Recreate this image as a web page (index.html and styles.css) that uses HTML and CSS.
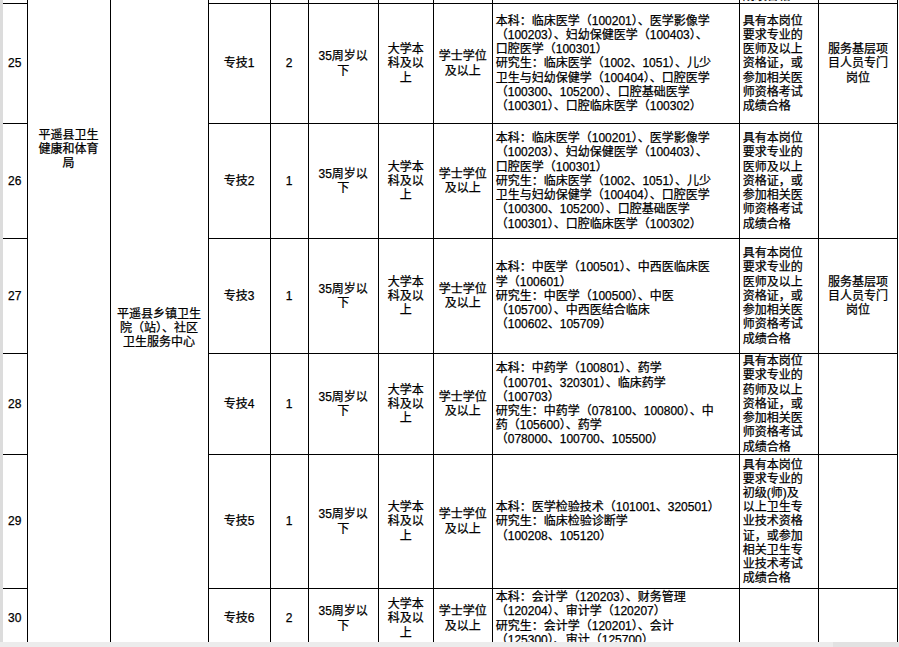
FILE: index.html
```html
<!DOCTYPE html>
<html lang="zh-CN">
<head>
<meta charset="utf-8">
<title>平遥县卫生健康和体育局 岗位表</title>
<link rel="stylesheet" href="styles.css">
</head>
<body>
<div class="page">
  <div class="viewport">
    <table class="posts">
      <colgroup>
        <col class="c-no"><col class="c-dept"><col class="c-unit"><col class="c-post"><col class="c-num"><col class="c-age"><col class="c-edu"><col class="c-deg"><col class="c-major"><col class="c-qual"><col class="c-note">
      </colgroup>
      <tbody>
        <tr class="r-prev">
          <td class="b"></td>
          <td class="merged dept" rowspan="7"><span class="dept-text">平遥县卫生<br>健康和体育<br>局</span></td>
          <td class="merged unit" rowspan="7"><span class="unit-text">平遥县乡镇卫生<br>院（站）、社区<br>卫生服务中心</span></td>
          <td class="b"></td><td class="b"></td><td class="b"></td><td class="b"></td><td class="b"></td><td class="b"></td>
          <td class="b qual"><div class="clip">成绩合格</div></td>
          <td class="b"></td>
        </tr>
        <tr class="r25">
          <td class="no">25</td>
          <td>专技1</td><td>2</td><td>35周岁以<br>下</td><td>大学本<br>科及以<br>上</td><td>学士学位<br>及以上</td>
          <td class="major">本科：临床医学（100201）、医学影像学<br>（100203）、妇幼保健医学（100403）、<br>口腔医学（100301）<br>研究生：临床医学（1002、1051）、儿少<br>卫生与妇幼保健学（100404）、口腔医学<br>（100300、105200）、口腔基础医学<br>（100301）、口腔临床医学（100302）</td>
          <td class="qual">具有本岗位<br>要求专业的<br>医师及以上<br>资格证，或<br>参加相关医<br>师资格考试<br>成绩合格</td>
          <td>服务基层项<br>目人员专门<br>岗位</td>
        </tr>
        <tr class="r26">
          <td class="no">26</td>
          <td>专技2</td><td>1</td><td>35周岁以<br>下</td><td>大学本<br>科及以<br>上</td><td>学士学位<br>及以上</td>
          <td class="major">本科：临床医学（100201）、医学影像学<br>（100203）、妇幼保健医学（100403）、<br>口腔医学（100301）<br>研究生：临床医学（1002、1051）、儿少<br>卫生与妇幼保健学（100404）、口腔医学<br>（100300、105200）、口腔基础医学<br>（100301）、口腔临床医学（100302）</td>
          <td class="qual">具有本岗位<br>要求专业的<br>医师及以上<br>资格证，或<br>参加相关医<br>师资格考试<br>成绩合格</td>
          <td></td>
        </tr>
        <tr class="r27">
          <td class="no">27</td>
          <td>专技3</td><td>1</td><td>35周岁以<br>下</td><td>大学本<br>科及以<br>上</td><td>学士学位<br>及以上</td>
          <td class="major">本科：中医学（100501）、中西医临床医<br>学（100601）<br>研究生：中医学（100500）、中医<br>（105700）、中西医结合临床<br>（100602、105709）</td>
          <td class="qual">具有本岗位<br>要求专业的<br>医师及以上<br>资格证，或<br>参加相关医<br>师资格考试<br>成绩合格</td>
          <td>服务基层项<br>目人员专门<br>岗位</td>
        </tr>
        <tr class="r28">
          <td class="no">28</td>
          <td>专技4</td><td>1</td><td>35周岁以<br>下</td><td>大学本<br>科及以<br>上</td><td>学士学位<br>及以上</td>
          <td class="major">本科：中药学（100801）、药学<br>（100701、320301）、临床药学<br>（100703）<br>研究生：中药学（078100、100800）、中<br>药（105600）、药学<br>（078000、100700、105500）</td>
          <td class="qual">具有本岗位<br>要求专业的<br>药师及以上<br>资格证，或<br>参加相关医<br>师资格考试<br>成绩合格</td>
          <td></td>
        </tr>
        <tr class="r29">
          <td class="no">29</td>
          <td>专技5</td><td>1</td><td>35周岁以<br>下</td><td>大学本<br>科及以<br>上</td><td>学士学位<br>及以上</td>
          <td class="major">本科：医学检验技术（101001、320501）<br>研究生：临床检验诊断学<br>（100208、105120）</td>
          <td class="qual">具有本岗位<br>要求专业的<br>初级(师)及<br>以上卫生专<br>业技术资格<br>证，或参加<br>相关卫生专<br>业技术考试<br>成绩合格</td>
          <td></td>
        </tr>
        <tr class="r30">
          <td class="no">30</td>
          <td>专技6</td><td>2</td><td>35周岁以<br>下</td><td>大学本<br>科及以<br>上</td><td>学士学位<br>及以上</td>
          <td class="major">本科：会计学（120203）、财务管理<br>（120204）、审计学（120207）<br>研究生：会计学（120201）、会计<br>（125300）、审计（125700）</td>
          <td class="qual"></td>
          <td></td>
        </tr>
      </tbody>
    </table>
  </div>
  <div class="hscroll"><div class="thumb"></div></div>
</div>
</body>
</html>
```

FILE: styles.css
```css
html, body {
  margin: 0;
  padding: 0;
  background: #ffffff;
}

.page {
  width: 899px;
  height: 647px;
  display: flex;
  flex-direction: column;
  overflow: hidden;
}

.viewport {
  height: 642px;
  overflow: hidden;
  border-left: 3px solid #dcdcdc;
  box-sizing: border-box;
  background: #fff;
}

.hscroll {
  height: 5px;
  background: #ececec;
  display: flex;
  justify-content: flex-end;
}

.hscroll .thumb {
  width: 66px;
  background: #e2e2e2;
}

.posts {
  border-collapse: collapse;
  table-layout: fixed;
  width: 895px;
  font-family: "Liberation Sans", "Noto Sans CJK SC", sans-serif;
  font-size: 12px;
  line-height: 14.2px;
  color: #000;
  -webkit-text-stroke: 0.25px #000;
}

.c-no { width: 24px; }
.c-dept { width: 83px; }
.c-unit { width: 98px; }
.c-post { width: 62px; }
.c-num { width: 38px; }
.c-age { width: 70px; }
.c-edu { width: 55px; }
.c-deg { width: 59px; }
.c-major { width: 247px; }
.c-qual { width: 79px; }
.c-note { width: 79px; }

.posts td {
  border: 1px solid #000;
  padding: 0 2px;
  text-align: center;
  vertical-align: middle;
  white-space: nowrap;
  overflow: hidden;
}

.posts td:first-child {
  border-left: none;
}

.posts tr.r-prev td {
  border-top: none;
  height: 3px;
  padding: 0;
}

.posts tr.r-prev td.merged {
  border-bottom: none;
}

.clip {
  height: 3px;
  overflow: hidden;
  display: flex;
  align-items: flex-end;
  line-height: 14px;
  padding-left: 3px;
  text-align: left;
}

.posts td.merged {
  vertical-align: top;
  border-top: none;
  border-bottom: none;
}

.dept-text {
  display: block;
  padding-top: 128px;
}

.unit-text {
  display: block;
  padding-top: 307px;
}

.posts td.major,
.posts td.qual {
  text-align: left;
  padding-left: 3px;
}

.r25 td { height: 119px; }
.r26 td { height: 114px; }
.r27 td { height: 114px; }
.r28 td { height: 100px; }
.r29 td { height: 133px; }
.r30 td { height: 59px; }
```
